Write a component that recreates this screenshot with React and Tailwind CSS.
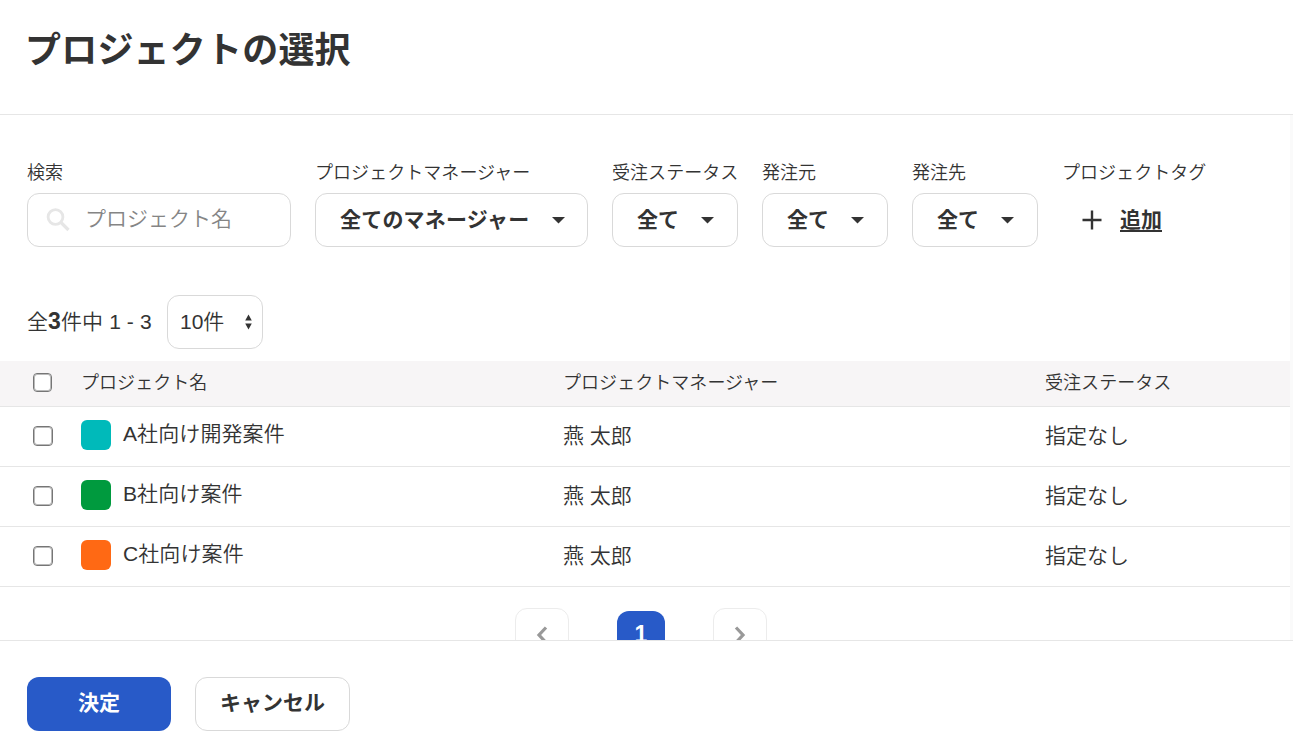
const filters = [
  { label: '受注ステータス' },
  { label: '発注元' },
  { label: '発注先' },
];

const projects = [
  { name: 'A社向け開発案件', color: 'bg-[#00baba]', manager: '燕 太郎', status: '指定なし' },
  { name: 'B社向け案件', color: 'bg-[#009a3e]', manager: '燕 太郎', status: '指定なし' },
  { name: 'C社向け案件', color: 'bg-[#ff6914]', manager: '燕 太郎', status: '指定なし' },
];

function Caret() {
  return (
    <svg className="h-[7px] w-[13px] shrink-0" viewBox="0 0 13 7" fill="#333">
      <path d="M0 0H13L6.5 6.5Z" />
    </svg>
  );
}

function Field({ label, className, children }) {
  return (
    <div className={`flex shrink-0 flex-col ${className}`}>
      <div className="mb-[6px] h-[27px] whitespace-nowrap text-[18px] leading-[27px] tracking-[0.05px]">{label}</div>
      {children}
    </div>
  );
}

function SelectButton({ text, wide }) {
  return (
    <button
      className={`flex h-[54px] items-center justify-between rounded-[12px] border border-[#d9d9d9] bg-white pl-6 text-[21px] font-bold ${wide ? 'pr-[22px]' : 'pr-[23px]'}`}
    >
      <span className={`-mt-px whitespace-nowrap ${wide ? 'tracking-[0.2px]' : ''}`}>{text}</span>
      <Caret />
    </button>
  );
}

function Checkbox({ small }) {
  return (
    <input
      type="checkbox"
      className={`-mt-0.5 block appearance-none rounded-[4px] border border-[#767676] bg-white outline outline-[#767676]/50 -outline-offset-2 ${small ? 'ml-[33px] size-[19px]' : 'ml-[33px] size-5'}`}
    />
  );
}

function PageArrow({ d }) {
  return (
    <button className="flex h-[54px] w-[54px] items-center justify-center rounded-[12px] border border-[#ececec] bg-white">
      <svg className="h-[18px] w-[12px]" viewBox="0 0 12 18" fill="none" stroke="#999" strokeWidth="3.2">
        <path d={d} />
      </svg>
    </button>
  );
}

export default function App() {
  return (
    <div className="flex h-[747px] w-[1293px] flex-col overflow-hidden bg-white font-['Liberation_Sans','Noto_Sans_CJK_JP',sans-serif] text-[21px] font-[350] text-[#333]">
      <header className="h-[115px] shrink-0 border-b border-[#e6e6e6] pt-6 pl-[25px]">
        <h1 className="text-[36px] leading-[54px] font-bold tracking-[0.2px]">プロジェクトの選択</h1>
      </header>

      <main className="h-[525px] shrink-0 overflow-hidden bg-[#fafafa] pr-[3px]">
        <div className="flex h-full flex-col bg-white">
          <div className="flex h-[180px] shrink-0 gap-6 pt-[45px] pl-[27px]">
            <Field label="検索" className="w-[264px]">
              <div className="flex h-[54px] items-center rounded-[12px] border border-[#d9d9d9] pl-[18px]">
                <svg className="h-6 w-6 shrink-0" viewBox="0 0 24 24" fill="none" stroke="#e6e6e6">
                  <circle cx="9.5" cy="9" r="7.4" strokeWidth="2.8" />
                  <path d="M15 14.5L22.5 22" strokeWidth="3.2" />
                </svg>
                <input
                  className="-mt-0.5 ml-[15px] w-[180px] bg-transparent outline-none placeholder:text-[#858585]"
                  placeholder="プロジェクト名"
                />
              </div>
            </Field>
            <Field label="プロジェクトマネージャー" className="w-[273px]">
              <SelectButton text="全てのマネージャー" wide />
            </Field>
            {filters.map((f) => (
              <Field key={f.label} label={f.label} className="w-[126px]">
                <SelectButton text="全て" />
              </Field>
            ))}
            <Field label="プロジェクトタグ" className="w-[180px]">
              <button className="flex h-[54px] items-center pl-5 text-[21px] font-bold">
                <svg className="h-5 w-5" viewBox="0 0 20 20" stroke="#333" strokeWidth="2.4">
                  <path d="M10 0.5V19.5M0.5 10H19.5" />
                </svg>
                <span className="-mt-px ml-[18px] underline decoration-2 underline-offset-[3px]">追加</span>
              </button>
            </Field>
          </div>

          <div className="flex h-[54px] shrink-0 items-center pl-[27px]">
            <span className="-mt-px w-[140px] whitespace-nowrap tracking-[0.1px]">
              全<b className="text-[23px] leading-none font-bold">3</b>件中 1 - 3
            </span>
            <div className="flex h-[54px] w-[96px] items-center justify-between rounded-[12px] border border-[#d9d9d9] pr-[10px] pl-3">
              <span>10件</span>
              <svg className="h-4 w-[7px]" viewBox="0 0 7 16" fill="#333">
                <path d="M3.5 0.5L6.8 6.5H0.2ZM3.5 15.5L6.8 9.5H0.2Z" />
              </svg>
            </div>
          </div>

          <div className="mt-3 grid h-[46px] shrink-0 grid-cols-[81px_482px_482px_1fr] items-center border-b border-[#e6e6e6] bg-[#f7f5f6] text-[18px] tracking-[0.05px]">
            <Checkbox small />
            <span>プロジェクト名</span>
            <span>プロジェクトマネージャー</span>
            <span>受注ステータス</span>
          </div>
          {projects.map((p) => (
            <div
              key={p.name}
              className="grid h-[60px] shrink-0 grid-cols-[81px_482px_482px_1fr] items-center border-b border-[#e6e6e6]"
            >
              <Checkbox />
              <span className="-mt-[3px] flex items-center">
                <span className={`mr-3 size-[30px] rounded-[6px] ${p.color}`} />
                <span className="-mt-0.5 tracking-[0.1px]">{p.name}</span>
              </span>
              <span className="-mt-0.5">{p.manager}</span>
              <span className="-mt-0.5">{p.status}</span>
            </div>
          ))}

          <div className="flex shrink-0 items-center gap-12 pt-[21px] pl-[515px]">
            <PageArrow d="M10 1.5L3 9L10 16.5" />
            <span className="flex size-12 items-center justify-center rounded-[12px] bg-[#285ac8] pb-0.5 text-[23px] leading-none font-bold text-white">
              1
            </span>
            <PageArrow d="M2 1.5L9 9L2 16.5" />
          </div>
        </div>
      </main>

      <footer className="flex flex-1 gap-6 border-t border-[#e6e6e6] pt-9 pl-[27px]">
        <button className="h-[54px] w-[144px] rounded-[12px] bg-[#285ac8] pb-0.5 font-bold text-white">決定</button>
        <button className="h-[54px] w-[155px] rounded-[12px] border border-[#d9d9d9] bg-white pb-0.5 font-bold">
          キャンセル
        </button>
      </footer>
    </div>
  );
}
